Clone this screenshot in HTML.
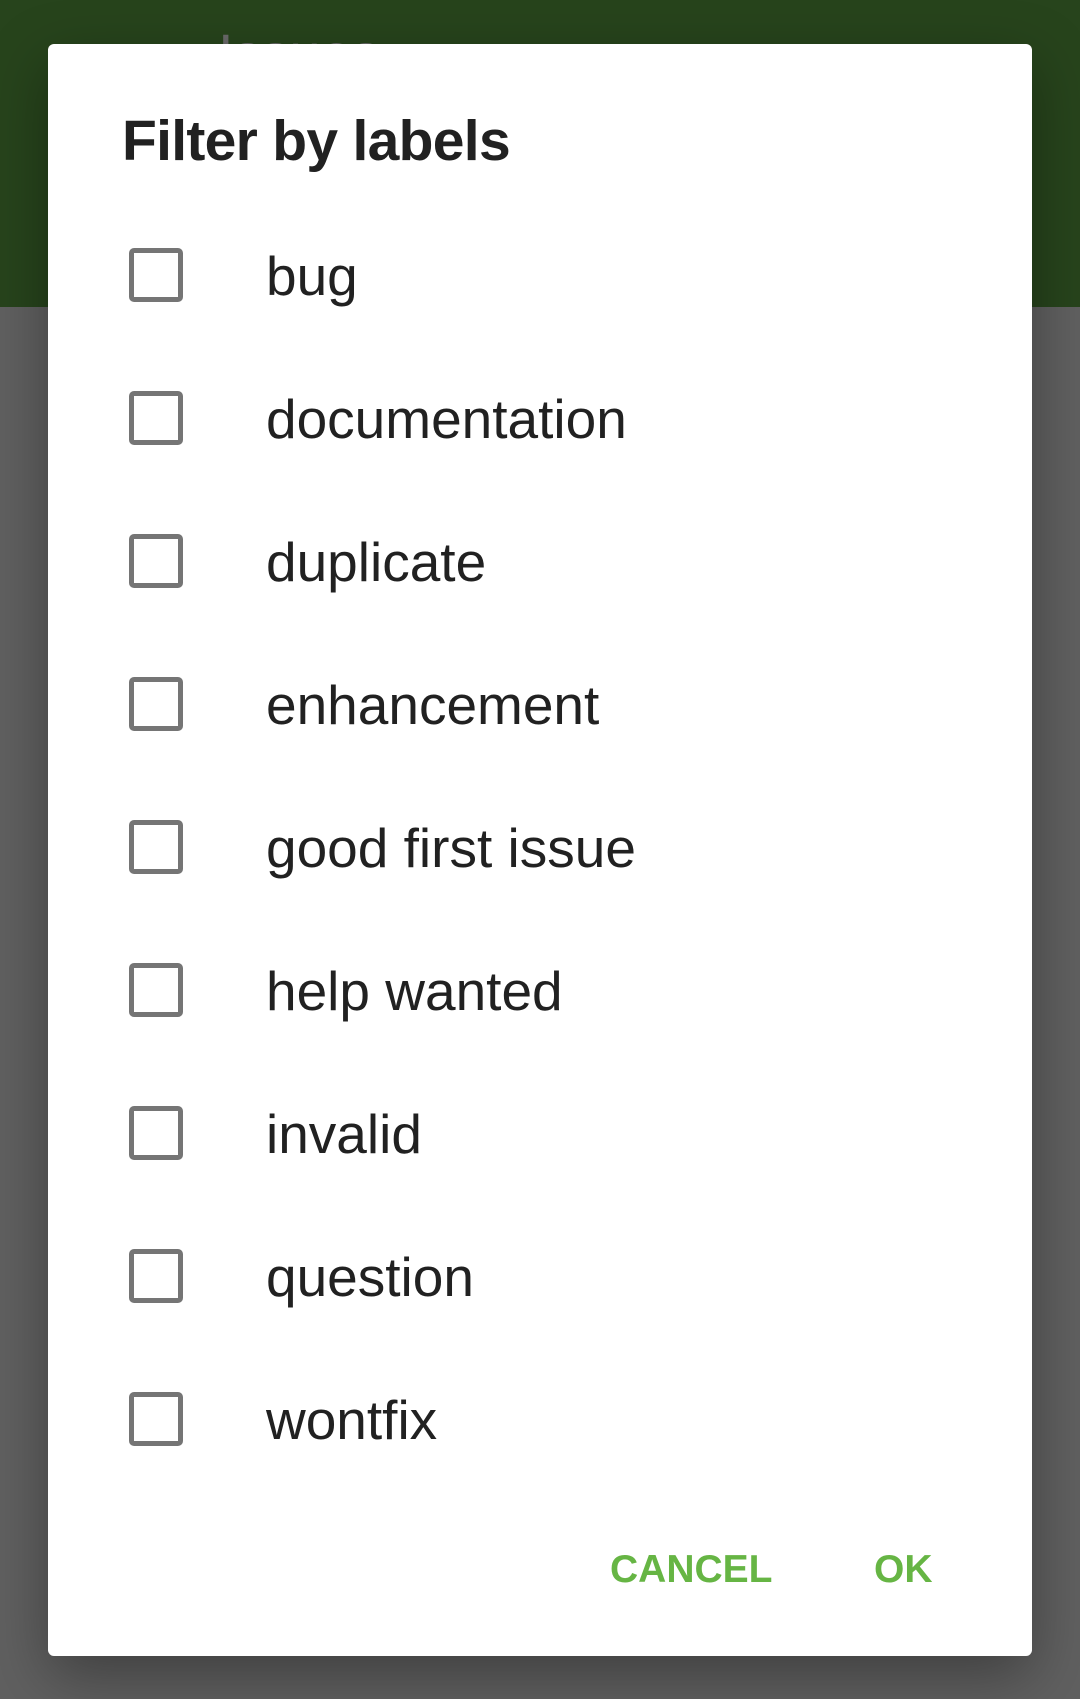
<!DOCTYPE html>
<html><head><style>
body{margin:0;width:1080px;height:1699px;background:#606060;position:relative;overflow:hidden;font-family:"Liberation Sans",sans-serif;}
.bar{position:absolute;left:0;top:0;width:1080px;height:307px;background:#27441c;}
.iss{position:absolute;left:218px;top:21px;font-size:56px;color:#6a6a6a;line-height:normal;}
.dlg{position:absolute;left:48px;top:44px;width:984px;height:1612px;background:#fff;border-radius:6px;box-shadow:0 20px 60px rgba(0,0,0,.35);}
.t{position:absolute;left:74px;top:69px;font-size:57px;font-weight:bold;color:#212121;line-height:1;letter-spacing:-0.7px}
.cb{position:absolute;left:81px;width:44px;height:44px;border:5px solid #757575;border-radius:5px;}
.lb{position:absolute;left:218px;font-size:55px;color:#212121;line-height:1;}
.btn{position:absolute;top:1506px;font-size:39px;font-weight:bold;color:#66b544;line-height:1;}
</style></head><body>
<div class="bar"></div>
<div class="iss">Issues</div>
<div class="dlg">
<div class="t">Filter by labels</div>
<div class="cb" style="top:204px"></div><div class="lb" style="top:205px">bug</div>
<div class="cb" style="top:347px"></div><div class="lb" style="top:348px">documentation</div>
<div class="cb" style="top:490px"></div><div class="lb" style="top:491px">duplicate</div>
<div class="cb" style="top:633px"></div><div class="lb" style="top:634px">enhancement</div>
<div class="cb" style="top:776px"></div><div class="lb" style="top:777px">good first issue</div>
<div class="cb" style="top:919px"></div><div class="lb" style="top:920px">help wanted</div>
<div class="cb" style="top:1062px"></div><div class="lb" style="top:1063px">invalid</div>
<div class="cb" style="top:1205px"></div><div class="lb" style="top:1206px">question</div>
<div class="cb" style="top:1348px"></div><div class="lb" style="top:1349px">wontfix</div>
<div class="btn" style="left:562px">CANCEL</div>
<div class="btn" style="left:826px">OK</div>
</div>
</body></html>
